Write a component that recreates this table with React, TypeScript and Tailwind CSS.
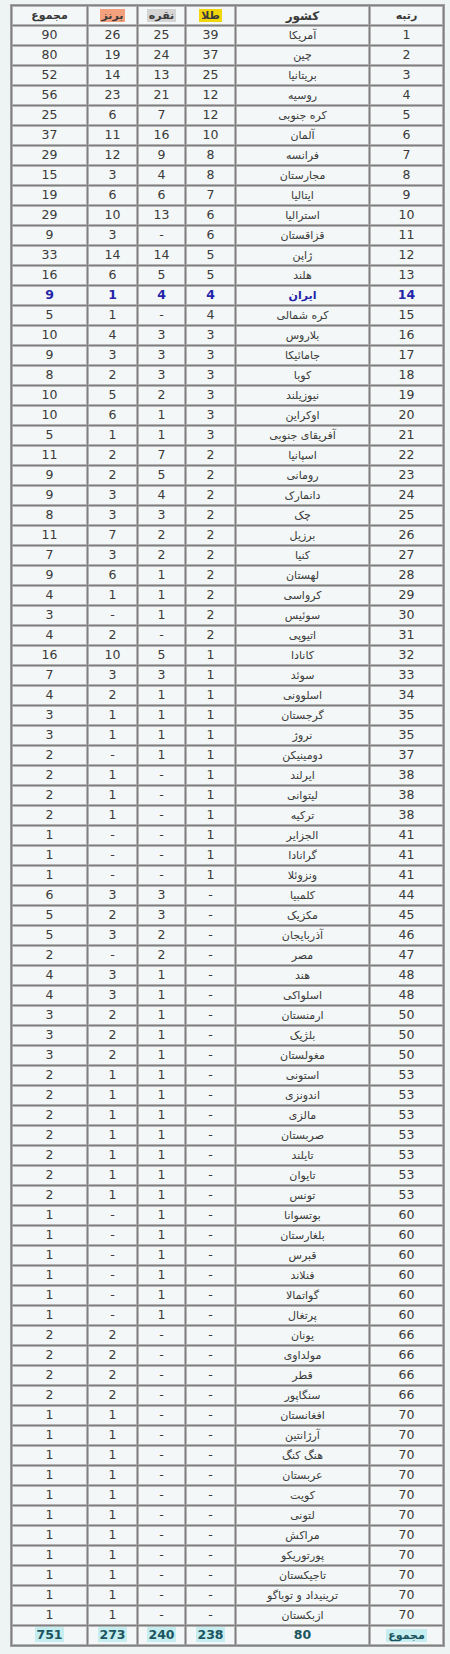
type Row = [string, string, string, string, string, string];

// rank, country, gold, silver, bronze, total
const rows: Row[] = [
  ['1', 'آمریکا', '39', '25', '26', '90'],
  ['2', 'چین', '37', '24', '19', '80'],
  ['3', 'بریتانیا', '25', '13', '14', '52'],
  ['4', 'روسیه', '12', '21', '23', '56'],
  ['5', 'کره جنوبی', '12', '7', '6', '25'],
  ['6', 'آلمان', '10', '16', '11', '37'],
  ['7', 'فرانسه', '8', '9', '12', '29'],
  ['8', 'مجارستان', '8', '4', '3', '15'],
  ['9', 'ایتالیا', '7', '6', '6', '19'],
  ['10', 'استرالیا', '6', '13', '10', '29'],
  ['11', 'قزاقستان', '6', '-', '3', '9'],
  ['12', 'ژاپن', '5', '14', '14', '33'],
  ['13', 'هلند', '5', '5', '6', '16'],
  ['14', 'ایران', '4', '4', '1', '9'],
  ['15', 'کره شمالی', '4', '-', '1', '5'],
  ['16', 'بلاروس', '3', '3', '4', '10'],
  ['17', 'جامائیکا', '3', '3', '3', '9'],
  ['18', 'کوبا', '3', '3', '2', '8'],
  ['19', 'نیوزیلند', '3', '2', '5', '10'],
  ['20', 'اوکراین', '3', '1', '6', '10'],
  ['21', 'آفریقای جنوبی', '3', '1', '1', '5'],
  ['22', 'اسپانیا', '2', '7', '2', '11'],
  ['23', 'رومانی', '2', '5', '2', '9'],
  ['24', 'دانمارک', '2', '4', '3', '9'],
  ['25', 'چک', '2', '3', '3', '8'],
  ['26', 'برزیل', '2', '2', '7', '11'],
  ['27', 'کنیا', '2', '2', '3', '7'],
  ['28', 'لهستان', '2', '1', '6', '9'],
  ['29', 'کرواسی', '2', '1', '1', '4'],
  ['30', 'سوئیس', '2', '1', '-', '3'],
  ['31', 'اتیوپی', '2', '-', '2', '4'],
  ['32', 'کانادا', '1', '5', '10', '16'],
  ['33', 'سوئد', '1', '3', '3', '7'],
  ['34', 'اسلوونی', '1', '1', '2', '4'],
  ['35', 'گرجستان', '1', '1', '1', '3'],
  ['35', 'نروژ', '1', '1', '1', '3'],
  ['37', 'دومینیکن', '1', '1', '-', '2'],
  ['38', 'ایرلند', '1', '-', '1', '2'],
  ['38', 'لیتوانی', '1', '-', '1', '2'],
  ['38', 'ترکیه', '1', '-', '1', '2'],
  ['41', 'الجزایر', '1', '-', '-', '1'],
  ['41', 'گرانادا', '1', '-', '-', '1'],
  ['41', 'ونزوئلا', '1', '-', '-', '1'],
  ['44', 'کلمبیا', '-', '3', '3', '6'],
  ['45', 'مکزیک', '-', '3', '2', '5'],
  ['46', 'آذربایجان', '-', '2', '3', '5'],
  ['47', 'مصر', '-', '2', '-', '2'],
  ['48', 'هند', '-', '1', '3', '4'],
  ['48', 'اسلواکی', '-', '1', '3', '4'],
  ['50', 'ارمنستان', '-', '1', '2', '3'],
  ['50', 'بلژیک', '-', '1', '2', '3'],
  ['50', 'مغولستان', '-', '1', '2', '3'],
  ['53', 'استونی', '-', '1', '1', '2'],
  ['53', 'اندونزی', '-', '1', '1', '2'],
  ['53', 'مالزی', '-', '1', '1', '2'],
  ['53', 'صربستان', '-', '1', '1', '2'],
  ['53', 'تایلند', '-', '1', '1', '2'],
  ['53', 'تایوان', '-', '1', '1', '2'],
  ['53', 'تونس', '-', '1', '1', '2'],
  ['60', 'بوتسوانا', '-', '1', '-', '1'],
  ['60', 'بلغارستان', '-', '1', '-', '1'],
  ['60', 'قبرس', '-', '1', '-', '1'],
  ['60', 'فنلاند', '-', '1', '-', '1'],
  ['60', 'گواتمالا', '-', '1', '-', '1'],
  ['60', 'پرتغال', '-', '1', '-', '1'],
  ['66', 'یونان', '-', '-', '2', '2'],
  ['66', 'مولداوی', '-', '-', '2', '2'],
  ['66', 'قطر', '-', '-', '2', '2'],
  ['66', 'سنگاپور', '-', '-', '2', '2'],
  ['70', 'افغانستان', '-', '-', '1', '1'],
  ['70', 'آرژانتین', '-', '-', '1', '1'],
  ['70', 'هنگ کنگ', '-', '-', '1', '1'],
  ['70', 'عربستان', '-', '-', '1', '1'],
  ['70', 'کویت', '-', '-', '1', '1'],
  ['70', 'لتونی', '-', '-', '1', '1'],
  ['70', 'مراکش', '-', '-', '1', '1'],
  ['70', 'پورتوریکو', '-', '-', '1', '1'],
  ['70', 'تاجیکستان', '-', '-', '1', '1'],
  ['70', 'ترینیداد و توباگو', '-', '-', '1', '1'],
  ['70', 'ازبکستان', '-', '-', '1', '1'],
];

const cell = 'h-[19px] p-0 border border-[#b4b4b4] bg-[#f3f7f7] text-center align-middle leading-none';
const num = 'text-[12.5px]';
const fa = 'text-[11px]';

export default function App() {
  return (
    <div
      dir="rtl"
      className="min-h-screen bg-[#eef3f3] pt-[4px] pl-[10px] pr-[5px] pb-[4px] text-[#3a3a3a] font-['DejaVu_Sans',sans-serif]"
    >
      <table className="w-[435px] table-fixed border-separate border-spacing-[1px] bg-[#7f7f7f] border border-[#a0a0a0]">
        <colgroup>
          <col className="w-[73px]" />
          <col className="w-[133px]" />
          <col className="w-[49px]" />
          <col className="w-[47px]" />
          <col className="w-[49px]" />
          <col className="w-[75px]" />
        </colgroup>
        <thead>
          <tr>
            <th className={`${cell} ${fa} font-bold`}>رتبه</th>
            <th className={`${cell} text-[12px] font-bold`}>کشور</th>
            <th className={`${cell} ${fa} font-bold`}>
              <span className="bg-[#f2d60c] px-[2px]">طلا</span>
            </th>
            <th className={`${cell} ${fa} font-bold`}>
              <span className="bg-[#d4d4d4] px-[2px]">نقره</span>
            </th>
            <th className={`${cell} ${fa} font-bold`}>
              <span className="bg-[#f2a07e] px-[2px]">برنز</span>
            </th>
            <th className={`${cell} ${fa} font-bold`}>مجموع</th>
          </tr>
        </thead>
        <tbody>
          {rows.map((r, i) => {
            const iran = r[1] === 'ایران';
            const tone = iran ? 'text-[#2424a8] font-bold' : '';
            return (
              <tr key={i}>
                <td className={`${cell} ${num} ${tone}`}>{r[0]}</td>
                <td className={`${cell} ${fa} ${tone}`}>{r[1]}</td>
                <td className={`${cell} ${num} ${tone}`}>{r[2]}</td>
                <td className={`${cell} ${num} ${tone}`}>{r[3]}</td>
                <td className={`${cell} ${num} ${tone}`}>{r[4]}</td>
                <td className={`${cell} ${num} ${tone}`}>{r[5]}</td>
              </tr>
            );
          })}
          <tr className="text-[#1c5560] font-bold">
            <td className={`${cell} ${fa}`}>
              <span className="bg-[#c6eef0] px-[2px]">مجموع</span>
            </td>
            <td className={`${cell} ${num}`}>80</td>
            <td className={`${cell} ${num}`}>
              <span className="bg-[#c6eef0] px-[1px]">238</span>
            </td>
            <td className={`${cell} ${num}`}>
              <span className="bg-[#c6eef0] px-[1px]">240</span>
            </td>
            <td className={`${cell} ${num}`}>
              <span className="bg-[#c6eef0] px-[1px]">273</span>
            </td>
            <td className={`${cell} ${num}`}>
              <span className="bg-[#c6eef0] px-[1px]">751</span>
            </td>
          </tr>
        </tbody>
      </table>
    </div>
  );
}
